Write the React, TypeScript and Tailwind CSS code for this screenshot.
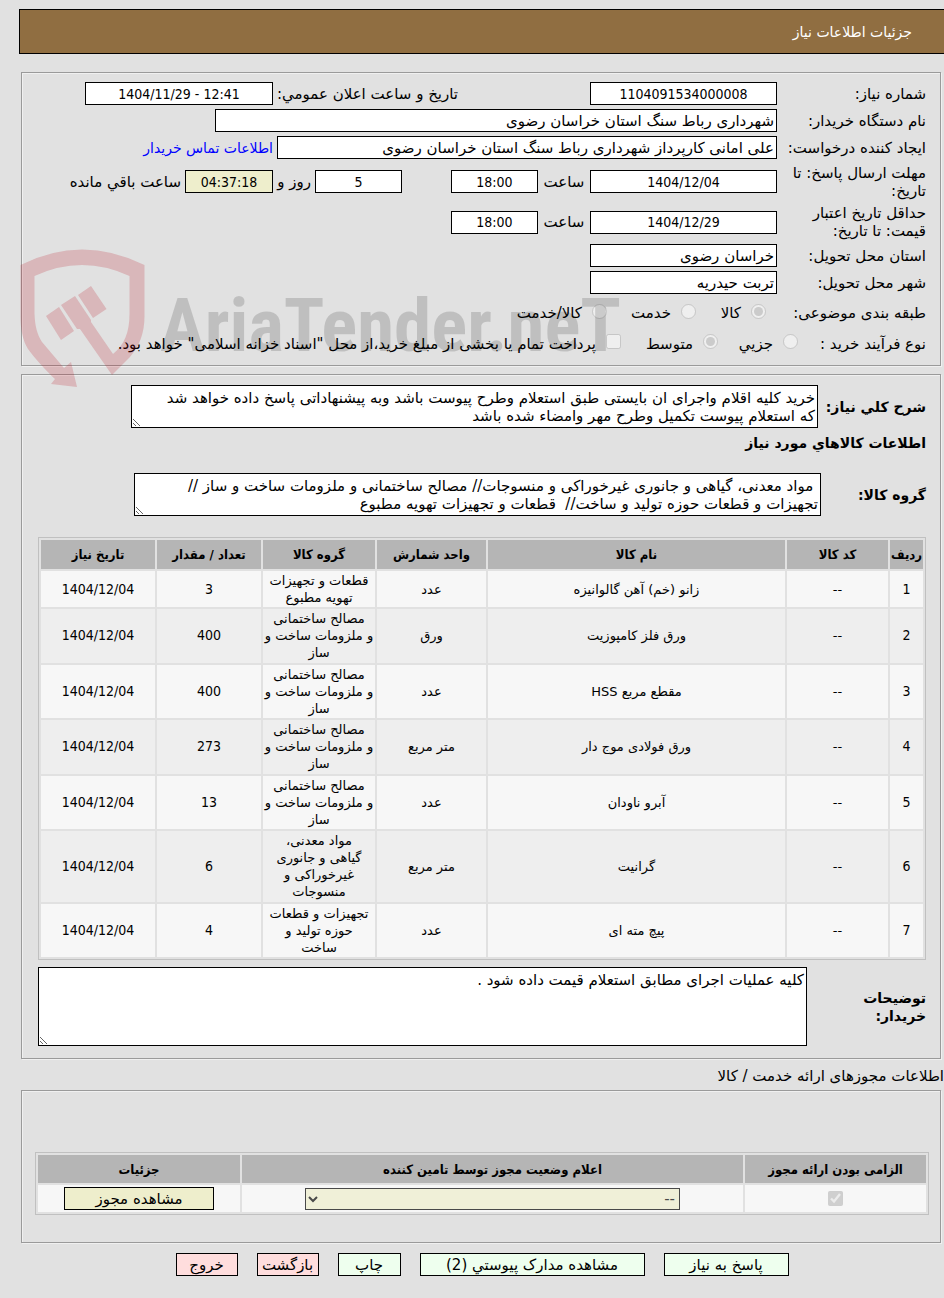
import type { ComponentProps, ReactNode } from 'react'
import clsx from 'clsx'

interface Item {
  name: string
  unit: string
  group: string
  count: string
  date: string
}

const items: Item[] = [
  { name: 'زانو (خم) آهن گالوانیزه', unit: 'عدد', group: 'قطعات و تجهیزات\nتهویه مطبوع', count: '3', date: '1404/12/04' },
  { name: 'ورق فلز کامپوزیت', unit: 'ورق', group: 'مصالح ساختمانی\nو ملزومات ساخت و\nساز', count: '400', date: '1404/12/04' },
  { name: 'مقطع مربع HSS', unit: 'عدد', group: 'مصالح ساختمانی\nو ملزومات ساخت و\nساز', count: '400', date: '1404/12/04' },
  { name: 'ورق فولادی موج دار', unit: 'متر مربع', group: 'مصالح ساختمانی\nو ملزومات ساخت و\nساز', count: '273', date: '1404/12/04' },
  { name: 'آبرو ناودان', unit: 'عدد', group: 'مصالح ساختمانی\nو ملزومات ساخت و\nساز', count: '13', date: '1404/12/04' },
  { name: 'گرانیت', unit: 'متر مربع', group: 'مواد معدنی،\nگیاهی و جانوری\nغیرخوراکی و\nمنسوجات', count: '6', date: '1404/12/04' },
  { name: 'پیچ مته ای', unit: 'عدد', group: 'تجهیزات و قطعات\nحوزه تولید و\nساخت', count: '4', date: '1404/12/04' }
]

const tableClassName =
  'w-full table-fixed border-separate border-spacing-[2px] border border-[#c0c0c0] text-center text-[13px] leading-[17px]'

const headCellClassName = "bg-[#b5b5b5] p-0 font-['DejaVu_Sans_Condensed','DejaVu_Sans',sans-serif] font-bold"

const numberClassName = "font-['DejaVu_Sans_Condensed','DejaVu_Sans',sans-serif] text-[14px] text-center"

const areaClassName = 'block border border-black bg-white px-[2px] py-[3px] leading-[18px]'

function Panel({ className, children }: { className?: string; children: ReactNode }) {
  return (
    <section
      className={clsx(
        'mr-[3px] ml-[21px] border border-[#9a9a9a] shadow-[1px_1px_0_#f0f0f0,inset_1px_1px_0_#f0f0f0]',
        className
      )}
    >
      {children}
    </section>
  )
}

interface FieldProps extends ComponentProps<'input'> {
  numeric?: boolean
}

function Field({ className, numeric = false, ...props }: FieldProps) {
  return (
    <input
      readOnly
      {...props}
      className={clsx('h-[23px] border border-black px-[2px]', numeric && numberClassName, className)}
    />
  )
}

interface RowProps {
  id?: string
  label: string
  className?: string
  labelWidth?: string
  children: ReactNode
}

function Row({ id, label, className = 'h-[27px]', labelWidth = 'w-[149px]', children }: RowProps) {
  return (
    <div className={clsx('flex items-center whitespace-nowrap', className)}>
      <label htmlFor={id} className={clsx('shrink-0 whitespace-normal', labelWidth)}>
        {label}
      </label>
      {children}
    </div>
  )
}

interface ChoiceProps {
  type?: 'radio' | 'checkbox'
  name: string
  label: string
  checked?: boolean
  className?: string
}

function Choice({ type = 'radio', name, label, checked = false, className }: ChoiceProps) {
  return (
    <label className={clsx('flex shrink-0 items-center gap-[10px]', className)}>
      <input type={type} name={name} defaultChecked={checked} disabled className="mb-1 size-[15px]" />
      {label}
    </label>
  )
}

function Watermark() {
  return (
    <div
      dir="ltr"
      aria-hidden="true"
      className="pointer-events-none absolute top-[248px] left-[20px] flex items-start gap-[14px]"
    >
      <svg width="126" height="140" viewBox="0 0 126 140" fill="#b80f1e" fillOpacity="0.2">
        <path d="M0.500 17Q62 -14 124.500 17V68C124.500 86 119 98 110 109L92 127L60 81L57 81L41 57L55 48L71 72L71 74L93 106C104 97 109.500 85 109.500 66V28Q62 6 14.500 28V66C15 78 17 86 22 94L44 120L51 114L57 139L31 136L35 131C27 124 13 108 8 101C3 93 0.500 82 0.500 68Z" />
        <path d="M26 68L39 59L54 83L41 92Z M58 47L71 38L86.500 61L73 70Z" />
      </svg>
      <span className="pt-[41px] font-['Roboto_Condensed','Roboto',sans-serif] text-[75px] leading-[72px] font-bold text-black/15">
        AriaTender.neT
      </span>
    </div>
  )
}

function ItemsTable() {
  return (
    <table className={tableClassName}>
      <colgroup>
        <col className="w-[33px]" />
        <col className="w-[101px]" />
        <col />
        <col className="w-[109px]" />
        <col className="w-[112px]" />
        <col className="w-[104px]" />
        <col className="w-[114px]" />
      </colgroup>
      <thead>
        <tr className="h-[29px]">
          <th className={headCellClassName}>ردیف</th>
          <th className={headCellClassName}>کد کالا</th>
          <th className={headCellClassName}>نام کالا</th>
          <th className={headCellClassName}>واحد شمارش</th>
          <th className={headCellClassName}>گروه کالا</th>
          <th className={headCellClassName}>تعداد / مقدار</th>
          <th className={headCellClassName}>تاریخ نیاز</th>
        </tr>
      </thead>
      <tbody>
        {items.map((item, i) => (
          <tr key={i} className="bg-[#f7f7f7] even:bg-[#eeeeee] [&>td]:py-px even:[&>td]:pb-[2px]">
            <td className={numberClassName}>{i + 1}</td>
            <td>--</td>
            <td>{item.name}</td>
            <td>{item.unit}</td>
            <td className="whitespace-pre">{item.group}</td>
            <td className={numberClassName}>{item.count}</td>
            <td className={numberClassName}>{item.date}</td>
          </tr>
        ))}
      </tbody>
    </table>
  )
}

function PermitsTable() {
  return (
    <table className={tableClassName}>
      <colgroup>
        <col className="w-[181px]" />
        <col />
        <col className="w-[202px]" />
      </colgroup>
      <thead>
        <tr className="h-[28px]">
          <th className={headCellClassName}>الزامی بودن ارائه مجوز</th>
          <th className={headCellClassName}>اعلام وضعیت مجوز توسط تامین کننده</th>
          <th className={headCellClassName}>جزئیات</th>
        </tr>
      </thead>
      <tbody>
        <tr className="h-[27px] bg-[#f7f7f7]">
          <td>
            <input
              type="checkbox"
              aria-label="الزامی بودن ارائه مجوز"
              defaultChecked
              disabled
              className="mx-auto block size-[15px]"
            />
          </td>
          <td>
            <select
              aria-label="اعلام وضعیت مجوز"
              disabled
              className="mx-auto block h-[22px] w-[375px] border border-black bg-[#eeeecc] text-[15px] leading-[18px] opacity-70"
            >
              <option>--</option>
            </select>
          </td>
          <td>
            <button
              type="button"
              className="mx-auto block h-[23px] w-[150px] border border-black bg-[#eeeecc] text-[15px] leading-[18px]"
            >
              مشاهده مجوز
            </button>
          </td>
        </tr>
      </tbody>
    </table>
  )
}

const actions = [
  { label: 'پاسخ به نیاز', className: 'w-[125px] bg-[#eeffee]' },
  { label: 'مشاهده مدارک پيوستي (2)', className: 'w-[225px] bg-[#eeffee]' },
  { label: 'چاپ', className: 'w-[63px] bg-[#eeffee]' },
  { label: 'بازگشت', className: 'w-[62px] bg-[#ffdddd]' },
  { label: 'خروج', className: 'w-[62px] bg-[#ffdddd]' }
]

export default function App() {
  return (
    <main
      dir="rtl"
      lang="fa"
      className="relative min-h-screen overflow-x-hidden bg-[#e1e1e1] pt-[9px] pb-[21px] font-['DejaVu_Sans',sans-serif] text-[15px] leading-[18px] text-black"
    >
      <header className="mb-[18px] ml-[19px] flex h-[45px] items-center border border-r-0 border-black bg-[#906e41] pr-[32px] text-[14px] text-white">
        <h1>جزئیات اطلاعات نیاز</h1>
      </header>

      <Panel className="mb-[8px] pt-[7px] pr-[14px] pb-[8px]">
        <Row id="need-no" label="شماره نیاز:">
          <Field id="need-no" numeric defaultValue="1104091534000008" className="w-[187px] bg-white" />
          <label htmlFor="announce" className="mr-[132px] w-[185px]">
            تاریخ و ساعت اعلان عمومي:
          </label>
          <Field id="announce" numeric dir="ltr" defaultValue="1404/11/29 - 12:41" className="w-[188px] bg-white" />
        </Row>
        <Row id="buyer" label="نام دستگاه خریدار:">
          <Field id="buyer" defaultValue="شهرداری رباط سنگ استان خراسان رضوی" className="w-[562px] bg-white" />
        </Row>
        <Row id="creator" label="ایجاد کننده درخواست:">
          <Field
            id="creator"
            defaultValue="علی امانی کارپرداز شهرداری رباط سنگ استان خراسان رضوی"
            className="w-[500px] bg-white"
          />
          <a href="#contact" className="mr-1 text-[14px] text-[#0000ff]">
            اطلاعات تماس خریدار
          </a>
        </Row>
        <Row id="deadline" label="مهلت ارسال پاسخ: تا تاریخ:" className="h-[41px]" labelWidth="w-[149px] pl-[10px]">
          <Field id="deadline" numeric defaultValue="1404/12/04" className="w-[187px] bg-white" />
          <label htmlFor="deadline-time" className="w-[52px] text-center">
            ساعت
          </label>
          <Field id="deadline-time" numeric defaultValue="18:00" className="w-[87px] bg-white" />
          <Field id="days" numeric defaultValue="5" className="mr-[49px] w-[87px] bg-white" />
          <label htmlFor="days" className="w-[42px] pr-1">
            روز و
          </label>
          <Field id="remaining" numeric defaultValue="04:37:18" className="w-[88px] bg-[#eeeecc]" />
          <label htmlFor="remaining" className="mr-1">
            ساعت باقي مانده
          </label>
        </Row>
        <Row id="validity" label="حداقل تاریخ اعتبار قیمت: تا تاریخ:" className="h-[40px]" labelWidth="w-[149px] pl-[20px]">
          <Field id="validity" numeric defaultValue="1404/12/29" className="w-[187px] bg-white" />
          <label htmlFor="validity-time" className="w-[52px] text-center">
            ساعت
          </label>
          <Field id="validity-time" numeric defaultValue="18:00" className="w-[87px] bg-white" />
        </Row>
        <Row id="province" label="استان محل تحویل:">
          <Field id="province" defaultValue="خراسان رضوی" className="w-[187px] bg-white" />
        </Row>
        <Row id="city" label="شهر محل تحویل:">
          <Field id="city" defaultValue="تربت حیدریه" className="w-[187px] bg-white" />
        </Row>
        <Row label="طبقه بندی موضوعی:" className="h-[34px]" labelWidth="w-[160px]">
          <Choice name="category" label="کالا" checked className="w-[70px]" />
          <Choice name="category" label="خدمت" className="w-[89px]" />
          <Choice name="category" label="کالا/خدمت" />
        </Row>
        <Row label="نوع فرآیند خرید :" labelWidth="w-[128px]">
          <Choice name="process" label="جزيي" className="w-[80px]" />
          <Choice name="process" label="متوسط" checked className="w-[97px]" />
          <Choice
            type="checkbox"
            name="treasury"
            label={'پرداخت تمام یا بخشی از مبلغ خرید،از محل "اسناد خزانه اسلامی" خواهد بود.'}
          />
        </Row>
      </Panel>

      <Panel className="pt-[10px] pr-[14px] pb-[12px] pl-[16px]">
        <div className="flex items-center">
          <label htmlFor="summary" className="w-[108px] shrink-0 text-[14px] font-bold whitespace-nowrap">
            شرح كلي نياز:
          </label>
          <textarea
            id="summary"
            readOnly
            className={clsx(areaClassName, 'h-[43px] w-[687px]')}
            defaultValue={
              'خرید کلیه اقلام واجرای ان بایستی طبق استعلام وطرح پیوست باشد وبه پیشنهاداتی پاسخ داده خواهد شد\nکه استعلام پیوست تکمیل وطرح مهر وامضاء شده باشد'
            }
          />
        </div>
        <h2 className="mt-[6px] text-[14px] font-bold">اطلاعات كالاهاي مورد نياز</h2>
        <div className="mt-[21px] flex items-center">
          <label htmlFor="groups" className="w-[105px] shrink-0 text-[14px] font-bold">
            گروه کالا:
          </label>
          <textarea
            id="groups"
            readOnly
            className={clsx(areaClassName, 'h-[43px] w-[687px]')}
            defaultValue={
              ' مواد معدنی، گیاهی و جانوری غیرخوراکی و منسوجات// مصالح ساختمانی و ملزومات ساخت و ساز //\nتجهیزات و قطعات حوزه تولید و ساخت//  قطعات و تجهیزات تهویه مطبوع'
            }
          />
        </div>
        <div className="mt-[21px] mb-[7px]">
          <ItemsTable />
        </div>
        <div className="flex items-center">
          <label htmlFor="notes" className="w-[119px] shrink-0 pl-[40px] text-[14px] font-bold">
            توضیحات خریدار:
          </label>
          <textarea
            id="notes"
            readOnly
            className={clsx(areaClassName, 'h-[79px] min-w-0 flex-1')}
            defaultValue="کلیه عملیات اجرای مطابق استعلام قیمت داده شود ."
          />
        </div>
      </Panel>

      <h2 className="pt-[8px] pb-[5px]">اطلاعات مجوزهای ارائه خدمت / کالا</h2>

      <Panel className="pt-[61px] pr-[11px] pb-[27px] pl-[13px]">
        <PermitsTable />
      </Panel>

      <footer className="mt-[10px] ml-[20px] flex justify-center gap-[19px]">
        {actions.map((action) => (
          <button
            key={action.label}
            type="button"
            className={clsx('h-[23px] border border-black whitespace-nowrap', action.className)}
          >
            {action.label}
          </button>
        ))}
      </footer>

      <Watermark />
    </main>
  )
}
